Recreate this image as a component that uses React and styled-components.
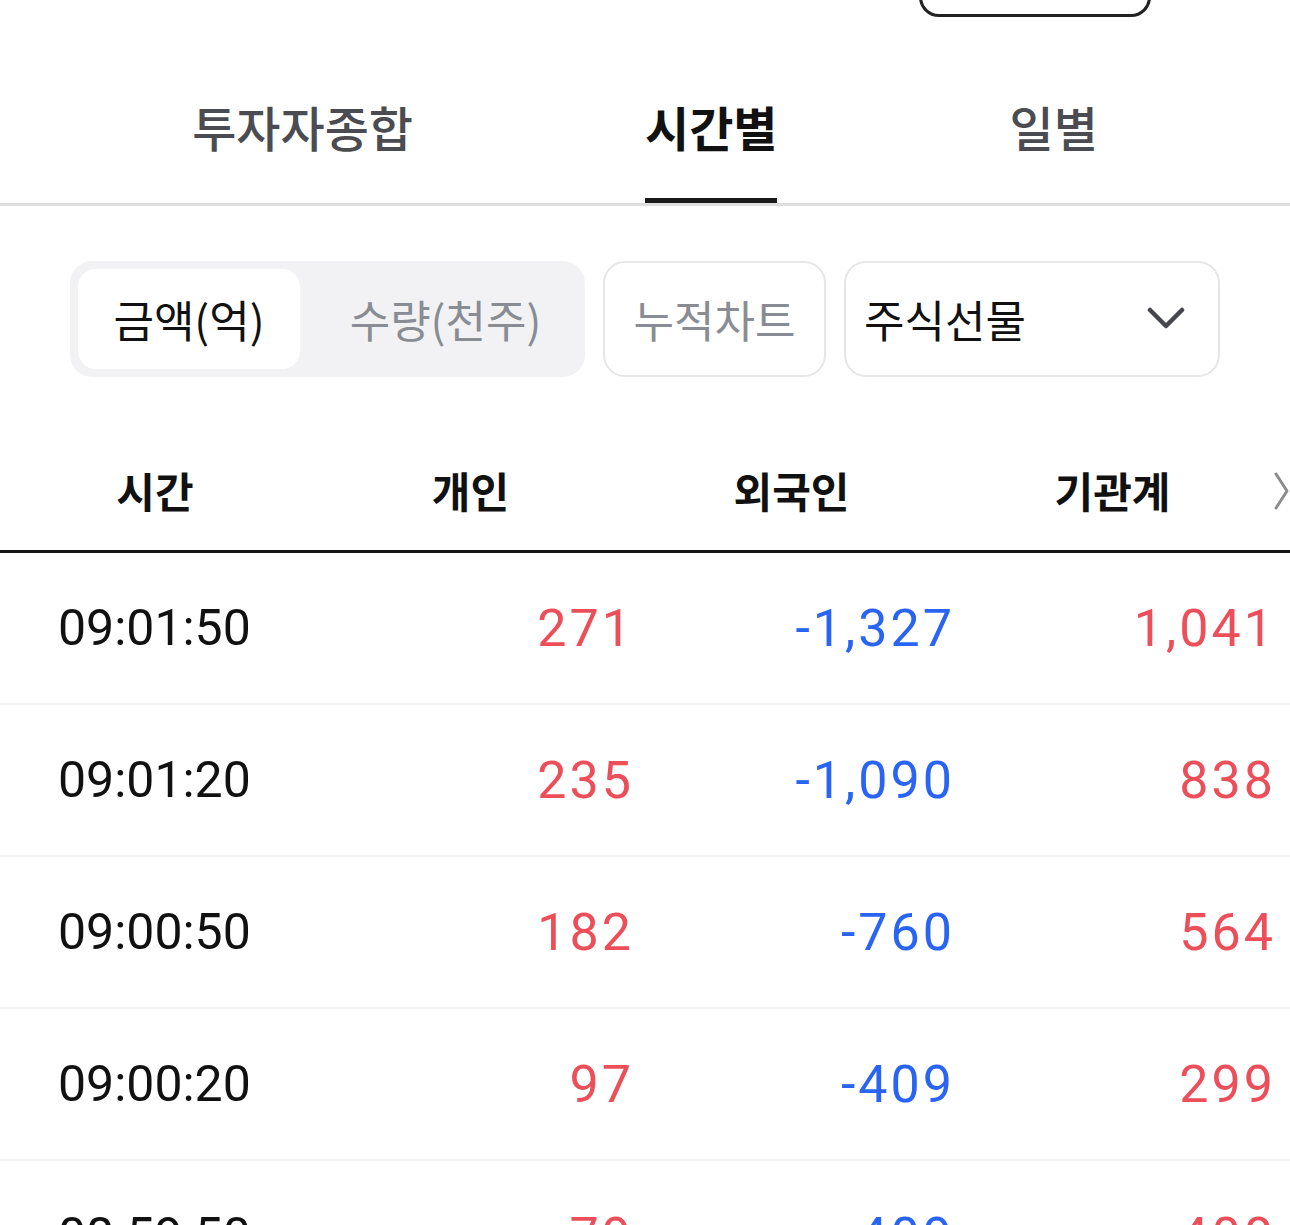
import React from "react";
import styled, { createGlobalStyle } from "styled-components";

const GlobalStyle = createGlobalStyle`
  body {
    margin: 0;
    background: #ffffff;
    font-family: "Noto Sans CJK KR", "Noto Sans", sans-serif;
    color: #111;
  }
`;

const Page = styled.div`
  width: 1290px;
  height: 1225px;
  overflow: hidden;
  background: #fff;
`;

const TopBar = styled.div`
  height: 17px;
  overflow: hidden;
  display: flex;
  justify-content: flex-end;
  padding-right: 139px;
`;

const TopButton = styled.div`
  width: 232px;
  height: 60px;
  margin-top: -43px;
  border: 3px solid #222;
  border-radius: 20px;
  box-sizing: border-box;
`;

const TabBar = styled.div`
  display: flex;
  justify-content: center;
  gap: 232px;
  border-bottom: 3px solid #dedede;
`;

const Tab = styled.div`
  padding: 84px 0 47px;
  font-size: 48px;
  line-height: 50px;
  font-weight: ${p => (p.$active ? 700 : 500)};
  color: ${p => (p.$active ? "#111" : "#4b4b52")};
  border-bottom: 5px solid ${p => (p.$active ? "#1a1a1a" : "transparent")};
  white-space: nowrap;
`;

const Controls = styled.div`
  display: flex;
  gap: 18px;
  margin-top: 55px;
  padding-left: 70px;
  height: 116px;
`;

const Segmented = styled.div`
  display: flex;
  width: 515px;
  padding: 8px;
  box-sizing: border-box;
  background: #f2f2f4;
  border-radius: 22px;
`;

const Segment = styled.div`
  display: flex;
  align-items: center;
  justify-content: center;
  flex: ${p => (p.$active ? "0 0 222px" : "1")};
  padding-left: ${p => (p.$active ? 0 : "14px")};
  border-radius: 18px;
  background: ${p => (p.$active ? "#fff" : "transparent")};
  color: ${p => (p.$active ? "#111" : "#8a8c93")};
  font-size: 44px;
`;

const OutlineButton = styled.div`
  display: flex;
  align-items: center;
  justify-content: ${p => (p.$select ? "space-between" : "center")};
  width: ${p => p.$w}px;
  box-sizing: border-box;
  padding: ${p => (p.$select ? "0 33px 0 18px" : "0")};
  border: 2px solid #e6e6e8;
  border-radius: 22px;
  font-size: 44px;
  color: ${p => (p.$select ? "#111" : "#8a8c93")};
`;

const Table = styled.div`
  margin-top: 55px;
`;

const HeadRow = styled.div`
  display: grid;
  grid-template-columns: 310px 321px 321px 321px 1fr;
  height: 118px;
  align-items: center;
  border-bottom: 3px solid #151515;
`;

const HeadCell = styled.div`
  text-align: center;
  font-size: 42px;
  font-weight: 700;
  color: #111;
  padding-bottom: 4px;
`;

const More = styled.div`
  display: flex;
  justify-content: flex-end;
  padding-right: 2px;
`;

const Row = styled.div`
  display: grid;
  grid-template-columns: 310px 321px 321px 321px 1fr;
  height: 150px;
  align-items: center;
  border-bottom: 2px solid #f2f2f3;
`;

const TimeCell = styled.div`
  padding-left: 58px;
  font-family: Roboto, "Liberation Sans", sans-serif;
  font-size: 50px;
  color: #111;
`;

const NumCell = styled.div`
  text-align: right;
  font-family: Roboto, "Liberation Sans", sans-serif;
  font-size: 52px;
  letter-spacing: 3px;
  margin-right: -3px;
  color: ${p => (p.$neg ? "#2964f5" : "#ec4f59")};
`;

const rows = [
  ["09:01:50", "271", "-1,327", "1,041"],
  ["09:01:20", "235", "-1,090", "838"],
  ["09:00:50", "182", "-760", "564"],
  ["09:00:20", "97", "-409", "299"],
  ["08:59:50", "79", "-409", "408"],
];

function ChevronDown() {
  return (
    <svg width="38" height="26" viewBox="0 0 38 26" fill="none">
      <path d="M3 4 L19 20 L35 4" stroke="#45464b" strokeWidth="4.5" strokeLinecap="round" strokeLinejoin="round" />
    </svg>
  );
}

function ChevronRight() {
  return (
    <svg width="18" height="40" viewBox="0 0 18 40" fill="none">
      <path d="M3 3 L14 20 L3 37" stroke="#8c8c8c" strokeWidth="3" strokeLinecap="round" strokeLinejoin="round" />
    </svg>
  );
}

export default function App() {
  return (
    <Page>
      <GlobalStyle />
      <TopBar>
        <TopButton />
      </TopBar>
      <TabBar>
        <Tab>투자자종합</Tab>
        <Tab $active>시간별</Tab>
        <Tab>일별</Tab>
      </TabBar>
      <Controls>
        <Segmented>
          <Segment $active>금액(억)</Segment>
          <Segment>수량(천주)</Segment>
        </Segmented>
        <OutlineButton $w={223}>누적차트</OutlineButton>
        <OutlineButton $w={376} $select>
          주식선물
          <ChevronDown />
        </OutlineButton>
      </Controls>
      <Table>
        <HeadRow>
          <HeadCell>시간</HeadCell>
          <HeadCell>개인</HeadCell>
          <HeadCell>외국인</HeadCell>
          <HeadCell>기관계</HeadCell>
          <More>
            <ChevronRight />
          </More>
        </HeadRow>
        {rows.map(r => (
          <Row key={r[0]}>
            <TimeCell>{r[0]}</TimeCell>
            {r.slice(1).map((v, i) => (
              <NumCell key={i} $neg={v.startsWith("-")}>{v}</NumCell>
            ))}
            <div />
          </Row>
        ))}
      </Table>
    </Page>
  );
}
